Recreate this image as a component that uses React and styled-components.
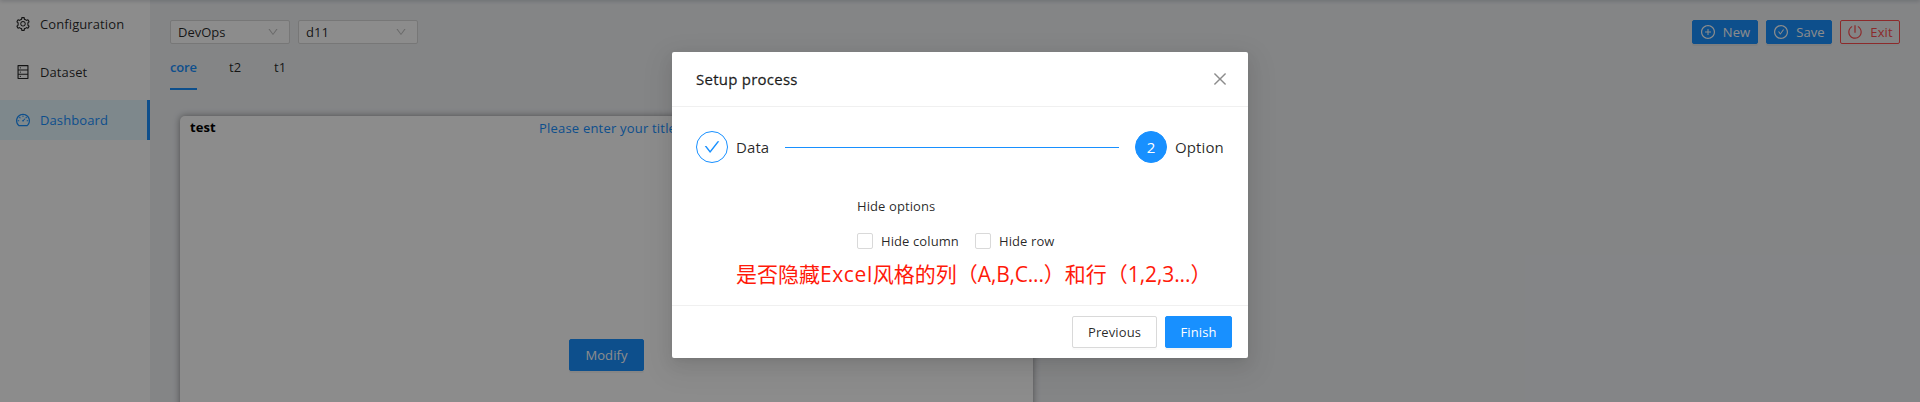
import React from "react";
import styled, { createGlobalStyle, css } from "styled-components";
import {
  AiOutlineSetting,
  AiOutlineDatabase,
  AiOutlineDashboard,
  AiOutlinePlusCircle,
  AiOutlineCheckCircle,
  AiOutlinePoweroff,
  AiOutlineDown,
  AiOutlineClose,
  AiOutlineCheck,
} from "react-icons/ai";

const GlobalStyle = createGlobalStyle`
  *, *::before { box-sizing: border-box; }
  body {
    margin: 0;
    overflow: hidden;
    font: 13px/22px "Open Sans", "Noto Sans", "Noto Sans CJK SC", sans-serif;
    letter-spacing: 0.1px;
    color: rgba(0, 0, 0, 0.85);
  }
  svg { flex: none; }
`;

const Screen = styled.div`
  position: relative;
  display: flex;
  height: 402px;
  overflow: hidden;
  background: #f0f2f5;
`;

const HeaderShadow = styled.div`
  position: absolute;
  inset: -4px 0 auto 0;
  height: 4px;
  box-shadow: 0 1px 4px rgba(0, 21, 41, 0.2);
`;

const Sidebar = styled.nav`
  flex: none;
  width: 150px;
  padding-top: 4px;
  background: #fff;
`;

const MenuItem = styled.div`
  display: flex;
  align-items: center;
  height: 40px;
  margin-bottom: 8px;
  padding-left: 15px;
  gap: 9px;
  svg { width: 16px; height: 16px; }
  ${(p) =>
    p.$active &&
    css`
      color: #1890ff;
      background: #e6f7ff;
      border-right: 3px solid #1890ff;
    `}
`;

const Main = styled.main`
  flex: 1;
  min-width: 0;
  padding: 20px 20px 0;
`;

const Toolbar = styled.div`
  display: flex;
  justify-content: space-between;
`;

const Group = styled.div`
  display: flex;
  gap: 8px;
`;

const Select = styled.div`
  display: flex;
  align-items: center;
  justify-content: space-between;
  width: 120px;
  height: 24px;
  padding: 0 10px 0 7px;
  background: #fff;
  border: 1px solid #d9d9d9;
  border-radius: 2px;
  letter-spacing: 0;
  svg { width: 12px; height: 12px; color: rgba(0, 0, 0, 0.25); }
`;

const Button = styled.button`
  display: flex;
  align-items: center;
  justify-content: center;
  gap: 7px;
  width: ${(p) => p.$width}px;
  height: ${(p) => (p.$small ? 24 : 32)}px;
  padding: 0 0 1px;
  font: inherit;
  letter-spacing: inherit;
  color: rgba(0, 0, 0, 0.85);
  background: #fff;
  border: 1px solid #d9d9d9;
  border-radius: 2px;
  box-shadow: 0 2px 0 rgba(0, 0, 0, 0.016);
  svg { width: 16px; height: 16px; }
  ${(p) =>
    p.$primary &&
    css`
      color: #fff;
      background: #1890ff;
      border-color: #1890ff;
      box-shadow: 0 2px 0 rgba(0, 0, 0, 0.043);
    `}
  ${(p) =>
    p.$danger &&
    css`
      color: #ff4d4f;
      background: transparent;
      border-color: #ff4d4f;
    `}
`;

const Tabs = styled.div`
  display: flex;
  gap: 32px;
  height: 46px;
`;

const Tab = styled.div`
  min-width: ${(p) => p.$width}px;
  padding-top: 12px;
  ${(p) =>
    p.$active &&
    css`
      width: 27px;
      color: #1890ff;
      font-weight: 600;
      letter-spacing: -0.2px;
      border-bottom: 2px solid #1890ff;
    `}
`;

const Card = styled.section`
  display: flex;
  flex-direction: column;
  align-items: center;
  width: 853px;
  height: 320px;
  margin: 26px 0 0 10px;
  padding: 0 10px;
  background: #fff;
  border-radius: 5px;
  box-shadow: 0 0 7px rgba(0, 0, 0, 0.42);
`;

const CardHead = styled.div`
  display: flex;
  width: 100%;
  height: 223px;
`;

const CardName = styled.strong`
  width: 349px;
  color: #000;
  font-weight: 700;
`;

const CardTitle = styled.span`
  padding-top: 1px;
  color: #1890ff;
  letter-spacing: 0.2px;
`;

const Mask = styled.div`
  position: absolute;
  inset: 0;
  display: flex;
  justify-content: center;
  align-items: flex-start;
  padding-top: 52px;
  background: rgba(0, 0, 0, 0.45);
`;

const Modal = styled.div`
  display: flex;
  flex-direction: column;
  width: 576px;
  height: 306px;
  background: #fff;
  border-radius: 2px;
  box-shadow: 0 3px 6px -4px rgba(0, 0, 0, 0.12), 0 6px 16px rgba(0, 0, 0, 0.08),
    0 9px 28px 8px rgba(0, 0, 0, 0.05);
`;

const ModalHead = styled.header`
  display: flex;
  align-items: center;
  justify-content: space-between;
  height: 55px;
  padding: 0 19px 0 24px;
  border-bottom: 1px solid #f0f0f0;
  font-size: 15px;
  letter-spacing: 0.25px;
  -webkit-text-stroke: 0.3px;
  svg { width: 18px; height: 18px; color: rgba(0, 0, 0, 0.45); }
`;

const Steps = styled.div`
  display: flex;
  align-items: center;
  height: 32px;
  margin: 24px 24px 0;
  font-size: 15px;
`;

const StepDot = styled.span`
  display: flex;
  align-items: center;
  justify-content: center;
  width: 32px;
  height: 32px;
  margin-right: 8px;
  border: 1px solid #1890ff;
  border-radius: 50%;
  color: ${(p) => (p.$current ? "#fff" : "#1890ff")};
  background: ${(p) => (p.$current ? "#1890ff" : "#fff")};
  svg { width: 18px; height: 18px; }
`;

const StepLabel = styled.span`
  width: ${(p) => p.$width}px;
`;

const StepLine = styled.span`
  flex: 1;
  height: 1px;
  margin: 1px 16px 0;
  background: #1890ff;
`;

const Options = styled.div`
  flex: 1;
  padding: 32px 0 0 185px;
`;

const CheckRow = styled.div`
  display: flex;
  margin-top: 13px;
`;

const CheckLabel = styled.label`
  display: flex;
  align-items: center;
  gap: 8px;
  width: 118px;
  white-space: nowrap;
  &::before {
    content: "";
    width: 16px;
    height: 16px;
    border: 1px solid #d9d9d9;
    border-radius: 2px;
  }
`;

const Note = styled.p`
  margin: 6px 0 0 -121px;
  color: #ff1a0a;
  font: 21px/32px "Open Sans", "Noto Sans CJK SC", sans-serif;
  letter-spacing: 0;
  white-space: nowrap;
`;

const Latin = styled.span`
  letter-spacing: ${(p) => p.$track}px;
`;

const ModalFoot = styled.footer`
  display: flex;
  justify-content: flex-end;
  gap: 8px;
  height: 53px;
  padding: 10px 16px;
  border-top: 1px solid #f0f0f0;
`;

export default function App() {
  return (
    <Screen>
      <GlobalStyle />
      <Sidebar>
        <MenuItem><AiOutlineSetting />Configuration</MenuItem>
        <MenuItem><AiOutlineDatabase />Dataset</MenuItem>
        <MenuItem $active><AiOutlineDashboard />Dashboard</MenuItem>
      </Sidebar>
      <Main>
        <Toolbar>
          <Group>
            <Select>DevOps<AiOutlineDown /></Select>
            <Select>d11<AiOutlineDown /></Select>
          </Group>
          <Group>
            <Button $small $primary $width={66}><AiOutlinePlusCircle />New</Button>
            <Button $small $primary $width={66}><AiOutlineCheckCircle />Save</Button>
            <Button $small $danger $width={60}><AiOutlinePoweroff />Exit</Button>
          </Group>
        </Toolbar>
        <Tabs>
          <Tab $active>core</Tab>
          <Tab $width={13}>t2</Tab>
          <Tab $width={13}>t1</Tab>
        </Tabs>
        <Card>
          <CardHead>
            <CardName>test</CardName>
            <CardTitle>Please enter your title</CardTitle>
          </CardHead>
          <Button $primary $width={75}>Modify</Button>
        </Card>
      </Main>
      <HeaderShadow />
      <Mask>
        <Modal role="dialog">
          <ModalHead>Setup process<AiOutlineClose /></ModalHead>
          <Steps>
            <StepDot><AiOutlineCheck /></StepDot>
            <StepLabel $width={33}>Data</StepLabel>
            <StepLine />
            <StepDot $current>2</StepDot>
            <StepLabel $width={49}>Option</StepLabel>
          </Steps>
          <Options>
            <div>Hide options</div>
            <CheckRow>
              <CheckLabel>Hide column</CheckLabel>
              <CheckLabel>Hide row</CheckLabel>
            </CheckRow>
            <Note>
              是否隐藏<Latin $track={0.6}>Excel</Latin>风格的列（
              <Latin $track={-0.2}>A,B,C...</Latin>）和行（
              <Latin $track={-0.1}>1,2,3...</Latin>）
            </Note>
          </Options>
          <ModalFoot>
            <Button $width={85}>Previous</Button>
            <Button $primary $width={67}>Finish</Button>
          </ModalFoot>
        </Modal>
      </Mask>
    </Screen>
  );
}
